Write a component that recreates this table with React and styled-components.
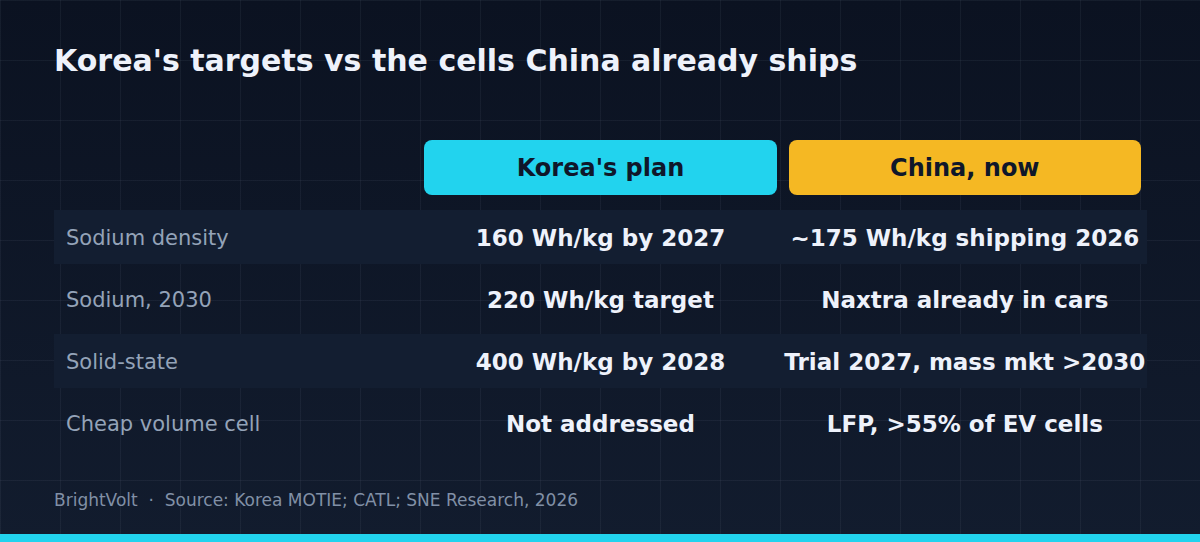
import React from 'react';
import styled, { createGlobalStyle } from 'styled-components';

const rows = [
  { label: 'Sodium density', korea: '160 Wh/kg by 2027', china: '~175 Wh/kg shipping 2026', band: true },
  { label: 'Sodium, 2030', korea: '220 Wh/kg target', china: 'Naxtra already in cars' },
  { label: 'Solid-state', korea: '400 Wh/kg by 2028', china: 'Trial 2027, mass mkt >2030', band: true },
  { label: 'Cheap volume cell', korea: 'Not addressed', china: 'LFP, >55% of EV cells' },
];

export default function App() {
  return (
    <>
      <GlobalStyle />
      <Page>
        <Content>
          <Title>Korea's targets vs the cells China already ships</Title>
          <Table>
            <HeaderRow>
              <span />
              <HeadCell><Pill $color="#22d3ee">Korea's plan</Pill></HeadCell>
              <HeadCell><Pill $color="#f5b823">China, now</Pill></HeadCell>
            </HeaderRow>
            {rows.map((r) => (
              <Row key={r.label} $band={r.band}>
                <Label>{r.label}</Label>
                <Value>{r.korea}</Value>
                <Value>{r.china}</Value>
              </Row>
            ))}
          </Table>
          <Footer>BrightVolt&nbsp;&nbsp;·&nbsp;&nbsp;Source: Korea MOTIE; CATL; SNE Research, 2026</Footer>
        </Content>
        <Bar />
      </Page>
    </>
  );
}

const GlobalStyle = createGlobalStyle`
  html, body {
    margin: 0;
    padding: 0;
    background: #0b1221;
  }
  * {
    box-sizing: border-box;
  }
`;

const Page = styled.div`
  width: 1200px;
  height: 542px;
  display: flex;
  flex-direction: column;
  font-family: 'DejaVu Sans', Verdana, sans-serif;
  background-color: #0e1626;
  background-image:
    linear-gradient(rgba(148, 163, 184, 0.08) 1px, transparent 1px),
    linear-gradient(90deg, rgba(148, 163, 184, 0.08) 1px, transparent 1px),
    linear-gradient(180deg, #0b1221 0%, #121c2e 100%);
  background-size: 60px 60px, 60px 60px, 100% 100%;
`;

const Content = styled.div`
  flex: 1;
  display: flex;
  flex-direction: column;
  padding: 43px 53px 0 54px;
`;

const Title = styled.h1`
  margin: 0;
  font-size: 30px;
  line-height: 36px;
  font-weight: 700;
  color: #eef2fb;
`;

const Table = styled.div`
  margin-top: 61px;
  display: flex;
  flex-direction: column;
  gap: 8px;
`;

const HeaderRow = styled.div`
  display: grid;
  grid-template-columns: repeat(3, 1fr);
  height: 55px;
  margin-bottom: 7px;
`;

const HeadCell = styled.div`
  padding: 0 6px;
  display: flex;
`;

const Pill = styled.div`
  flex: 1;
  display: flex;
  align-items: center;
  justify-content: center;
  border-radius: 8px;
  background: ${(p) => p.$color};
  color: #0f172a;
  font-size: 24px;
  font-weight: 700;
`;

const Row = styled.div`
  display: grid;
  grid-template-columns: repeat(3, 1fr);
  align-items: center;
  height: 54px;
  background: ${(p) => (p.$band ? '#131e31' : 'transparent')};
`;

const Label = styled.div`
  padding-left: 12px;
  padding-top: 2px;
  font-size: 21px;
  color: #94a3b8;
`;

const Value = styled.div`
  text-align: center;
  padding-top: 2px;
  font-size: 23px;
  font-weight: 700;
  color: #eef2fb;
  white-space: nowrap;
`;

const Footer = styled.div`
  margin-top: 40px;
  font-size: 17px;
  line-height: 20px;
  color: #8190a6;
`;

const Bar = styled.div`
  height: 8px;
  background: #22d3ee;
`;
